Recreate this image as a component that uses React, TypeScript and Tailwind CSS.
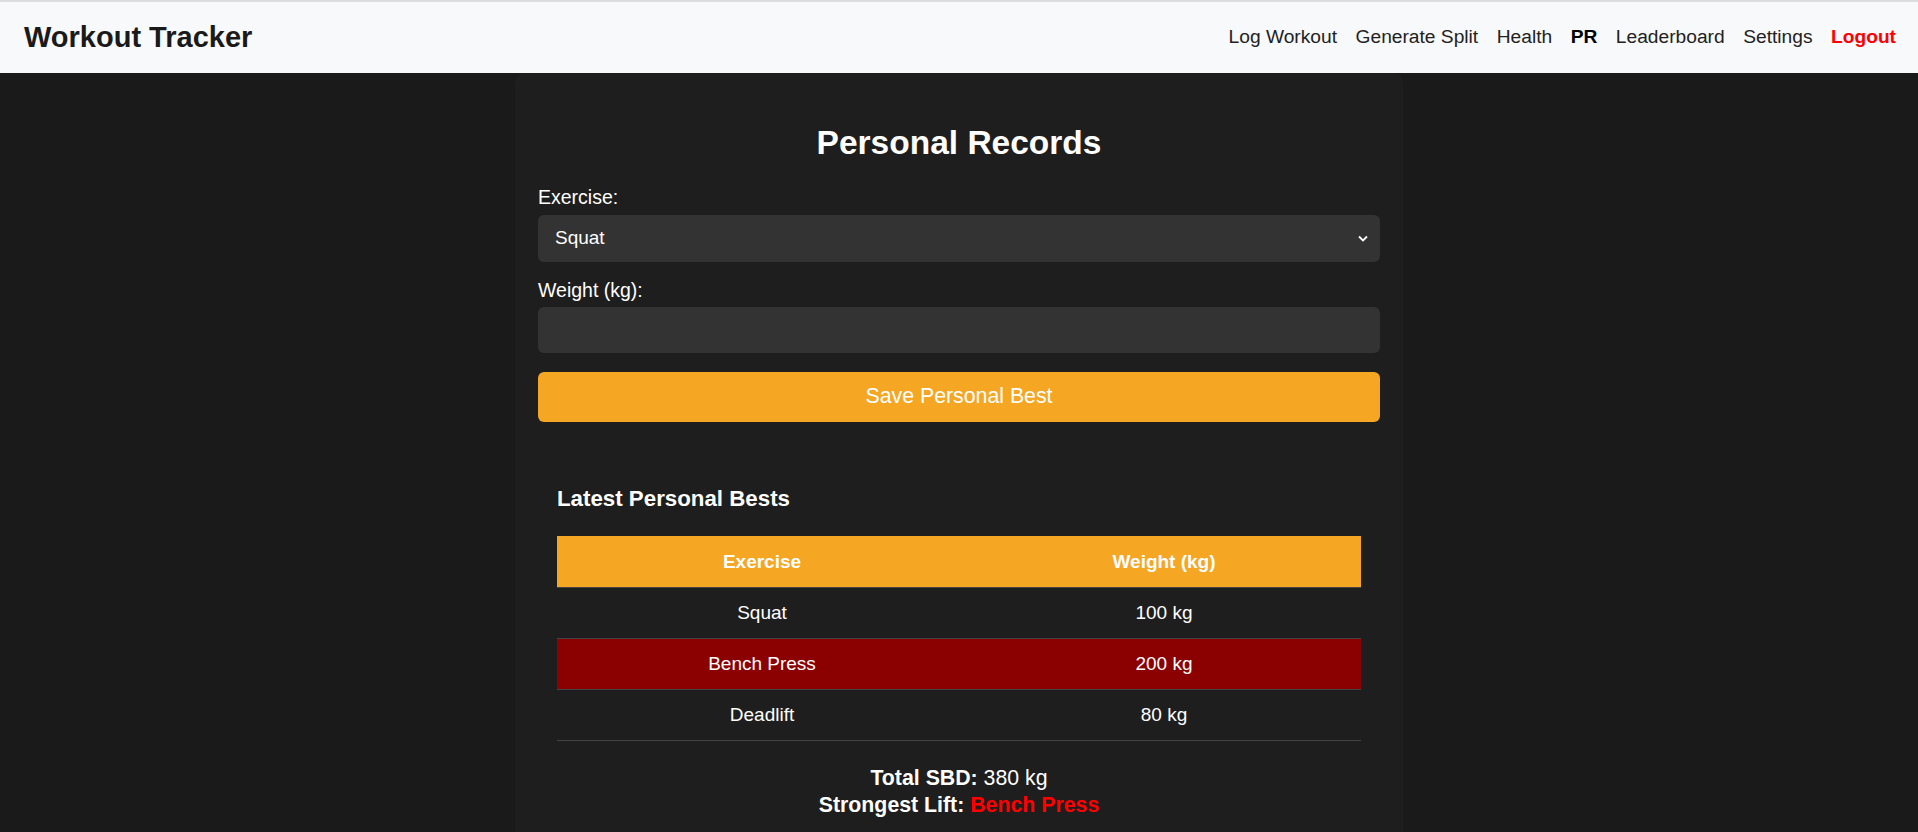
import { useState } from "react"

type Record = {
  exercise: string
  weight: number
}

const records: Record[] = [
  { exercise: "Squat", weight: 100 },
  { exercise: "Bench Press", weight: 200 },
  { exercise: "Deadlift", weight: 80 },
]

const links = ["Log Workout", "Generate Split", "Health", "PR", "Leaderboard", "Settings"]

function Navbar() {
  return (
    <nav className="flex items-center justify-between h-[73px] border-t-2 border-[#dcdcdc] bg-[#f8f9fa] pl-[24px] pr-[22px]">
      <h1 className="text-[29px] font-bold text-[#1a1a1a]">Workout Tracker</h1>
      <div className="flex items-center gap-[18.5px] text-[19.2px] text-[#222]">
        {links.map(link => (
          <a key={link} href="#" className={link === "PR" ? "font-bold text-black" : ""}>
            {link}
          </a>
        ))}
        <a href="#" className="font-bold text-[#ff0000]">Logout</a>
      </div>
    </nav>
  )
}

function App() {
  const [exercise, setExercise] = useState("Squat")
  const [weight, setWeight] = useState("")

  const total = records.reduce((sum, r) => sum + r.weight, 0)
  const strongest = records.reduce((a, b) => (b.weight > a.weight ? b : a))

  return (
    <div className="min-h-screen bg-[#1a1a1a] font-['Liberation_Sans',Arial,sans-serif]">
      <Navbar />

      <main className="mx-auto w-[888px] rounded-[10px] bg-[#1e1e1e] px-[23px] pt-[24px] pb-[40px] text-white">
        <h2 className="mt-[27px] text-center text-[33.5px] font-bold leading-[38px]">Personal Records</h2>

        <form className="mt-[24px]" onSubmit={e => e.preventDefault()}>
          <label htmlFor="exercise" className="block text-[19.5px] leading-[22px]">Exercise:</label>
          <div className="relative mt-[7px]">
            <select
              id="exercise"
              value={exercise}
              onChange={e => setExercise(e.target.value)}
              className="block h-[47px] w-full appearance-none rounded-[6px] bg-[#333] pl-[17px] text-[19px] text-white outline-none"
            >
              <option>Squat</option>
              <option>Bench Press</option>
              <option>Deadlift</option>
            </select>
            <svg className="pointer-events-none absolute right-[12px] top-[20px]" width="10" height="7" viewBox="0 0 10 7">
              <path d="M1 1.5 L5 5.5 L9 1.5" fill="none" stroke="white" strokeWidth="1.8" />
            </svg>
          </div>

          <label htmlFor="weight" className="mt-[17px] block text-[19.5px] leading-[22px]">Weight (kg):</label>
          <input
            id="weight"
            type="number"
            value={weight}
            onChange={e => setWeight(e.target.value)}
            className="mt-[6px] block h-[46px] w-full rounded-[6px] bg-[#333] px-[17px] text-[19px] text-white outline-none"
          />

          <button
            type="submit"
            className="mt-[19px] block h-[50px] w-full rounded-[6px] bg-[#f5a623] text-[21.3px] text-white"
          >
            Save Personal Best
          </button>
        </form>

        <section className="mt-[64px] px-[19px]">
          <h3 className="text-[22.3px] font-bold leading-[26px]">Latest Personal Bests</h3>

          <table className="mt-[24px] w-full border-collapse text-[19px]">
            <thead>
              <tr className="bg-[#f5a623]">
                <th className="w-[51%] py-[14px] font-bold leading-[23px]">Exercise</th>
                <th className="py-[14px] font-bold leading-[23px]">Weight (kg)</th>
              </tr>
            </thead>
            <tbody>
              {records.map(r => (
                <tr
                  key={r.exercise}
                  className={`border-t border-[#444] ${r.exercise === strongest.exercise ? "bg-[#8b0000]" : ""}`}
                >
                  <td className="py-[14px] text-center leading-[22px]">{r.exercise}</td>
                  <td className="py-[14px] text-center leading-[22px]">{r.weight} kg</td>
                </tr>
              ))}
              <tr className="border-t border-[#444]"><td colSpan={2}></td></tr>
            </tbody>
          </table>

          <div className="mt-[24px] text-center text-[21.3px] leading-[27px]">
            <p><span className="font-bold">Total SBD:</span> {total} kg</p>
            <p>
              <span className="font-bold">Strongest Lift:</span>{" "}
              <span className="font-bold text-[#ff0000]">{strongest.exercise}</span>
            </p>
          </div>
        </section>
      </main>
    </div>
  )
}

export default App
